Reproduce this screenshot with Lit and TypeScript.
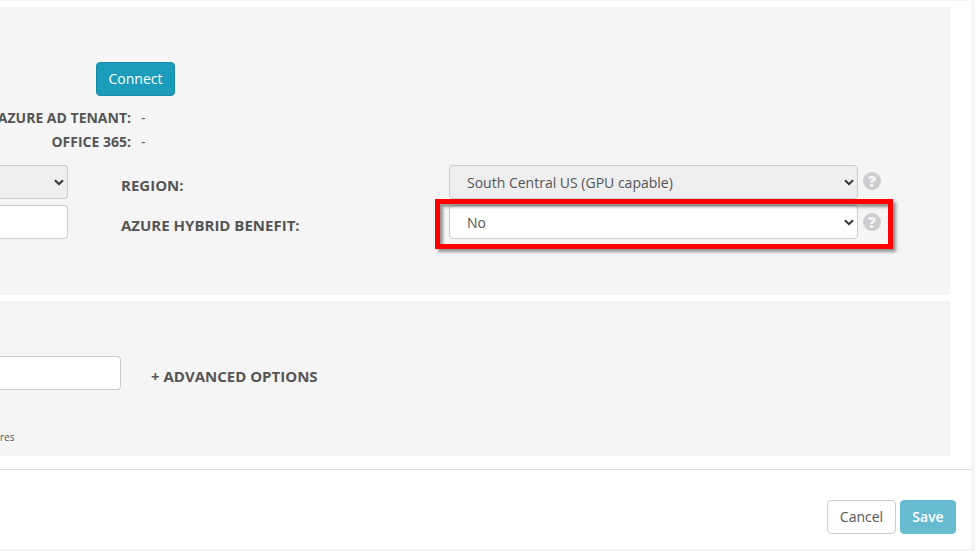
import { LitElement, html, css, svg } from "lit";
import { customElement } from "lit/decorators.js";

const chevron = svg`<svg class="chev" width="10" height="7" viewBox="0 0 10 7"><path d="M1 1.2 L5 5.2 L9 1.2" fill="none" stroke="#333" stroke-width="2"/></svg>`;

@customElement("app-root")
export class AppRoot extends LitElement {
  static styles = css`
    :host {
      display: block;
      width: 975px;
      height: 551px;
      overflow: hidden;
      position: relative;
      background: #fff;
      font-family: "Open Sans", sans-serif;
      font-size: 14px;
      color: #555;
    }
    .page {
      width: 971px;
      height: 549px;
      box-sizing: border-box;
      padding-top: 7px;
      display: flex;
      flex-direction: column;
      background: #fff;
    }
    .panel {
      width: 950px;
      background: #f5f5f5;
      flex: none;
      box-sizing: border-box;
      overflow: hidden;
    }
    .p1 { height: 288px; padding-top: 55px; }
    .p2 {
      height: 155px;
      margin-top: 6px;
      padding-top: 55px;
      position: relative;
    }
    .connect-row { padding-left: 96px; }
    .connect {
      width: 79px;
      height: 34px;
      box-sizing: border-box;
      background: #1a9cba;
      border: 1px solid #1789a3;
      border-radius: 4px;
      color: #fff;
      font: 14px "Open Sans", sans-serif;
      padding: 0 0 2px;
      display: block;
    }
    .info {
      margin: 10px 0 0 -40px;
      display: grid;
      grid-template-columns: 171px auto;
      column-gap: 10px;
      justify-content: start;
      line-height: 24px;
    }
    .info b { text-align: right; white-space: nowrap; color: #555; font-weight: 700; }
    .form {
      margin-top: 11px;
      display: grid;
      grid-template-columns: 68px 381px 1fr;
      grid-auto-rows: 34px;
      row-gap: 6px;
    }
    .ctl {
      box-sizing: border-box;
      height: 34px;
      border: 1px solid #ccc;
      border-radius: 4px;
      background: #fff;
      display: flex;
      align-items: center;
      justify-content: space-between;
    }
    .ctl.off { background: #eee; }
    .left { border-left: 0; border-radius: 0 4px 4px 0; padding-right: 3px; justify-content: flex-end; }
    .lab {
      padding-left: 53px;
      font-size: 15px;
      font-weight: 700;
      line-height: 41px;
      white-space: nowrap;
    }
    .field { display: flex; align-items: center; position: relative; }
    .field .ctl { width: 409px; padding: 0 3px 0 17px; flex: none; }
    .help {
      width: 18px;
      height: 18px;
      border-radius: 50%;
      background: #ccc;
      color: #f5f5f5;
      font-size: 16px;
      font-weight: 800;
      line-height: 18px;
      text-align: center;
      margin-left: 5px;
      flex: none;
    }
    .help.up { margin-top: -2px; }
    .highlight {
      position: absolute;
      left: -14px;
      top: -6px;
      width: 458px;
      height: 50px;
      box-sizing: border-box;
      border: 5px solid #f00;
      box-shadow: 3px 3px 3px rgba(0, 0, 0, 0.4), inset 3px 3px 3px rgba(0, 0, 0, 0.4);
      pointer-events: none;
    }
    .chev { flex: none; }
    .adv-row { display: flex; align-items: center; height: 34px; }
    .input { width: 121px; height: 34px; box-sizing: border-box; background: #fff; border: 1px solid #ccc; border-left: 0; border-radius: 0 4px 4px 0; }
    .adv { margin: 6px 0 0 30px; font-size: 15px; font-weight: 700; white-space: nowrap; color: #555; }
    .res { position: absolute; left: 0; top: 129px; font-size: 10px; line-height: 14px; color: #555; }
    .footer {
      margin-top: 13px;
      border-top: 1px solid #ddd;
      flex: 1;
      display: flex;
      justify-content: flex-end;
      gap: 4px;
      padding: 30px 15px 0 0;
    }
    .btn {
      height: 34px;
      box-sizing: border-box;
      border-radius: 4px;
      font: 14px "Open Sans", sans-serif;
      padding: 0 0 2px;
    }
    .cancel { width: 69px; background: #fff; border: 1px solid #ccc; color: #555; }
    .save { width: 56px; background: #66bbd1; border: 1px solid #66bbd1; color: #fff; font-weight: 600; }
    .scroll { position: absolute; right: 0; top: 0; bottom: 0; width: 4px; background: #f5f5f5; }
    .bottom { position: absolute; left: 0; right: 0; bottom: 0; height: 2px; background: #f5f5f5; }
    .top { position: absolute; left: 0; right: 0; top: 0; height: 1px; background: #f5f5f5; }
  `;

  render() {
    return html`
      <div class="page">
        <section class="panel p1">
          <div class="connect-row"><button class="connect">Connect</button></div>
          <div class="info">
            <b>AZURE AD TENANT:</b><span>-</span>
            <b>OFFICE 365:</b><span>-</span>
          </div>
          <div class="form">
            <div class="ctl off left">${chevron}</div>
            <div class="lab">REGION:</div>
            <div class="field">
              <div class="ctl off">South Central US (GPU capable)${chevron}</div>
              <span class="help up">?</span>
            </div>
            <div class="ctl left"></div>
            <div class="lab">AZURE HYBRID BENEFIT:</div>
            <div class="field">
              <div class="ctl">No${chevron}</div>
              <span class="help">?</span>
              <div class="highlight"></div>
            </div>
          </div>
        </section>
        <section class="panel p2">
          <div class="adv-row">
            <div class="input"></div>
            <div class="adv">+ ADVANCED OPTIONS</div>
          </div>
          <div class="res">res</div>
        </section>
        <footer class="footer">
          <button class="btn cancel">Cancel</button>
          <button class="btn save">Save</button>
        </footer>
      </div>
      <div class="top"></div>
      <div class="scroll"></div>
      <div class="bottom"></div>
    `;
  }
}
